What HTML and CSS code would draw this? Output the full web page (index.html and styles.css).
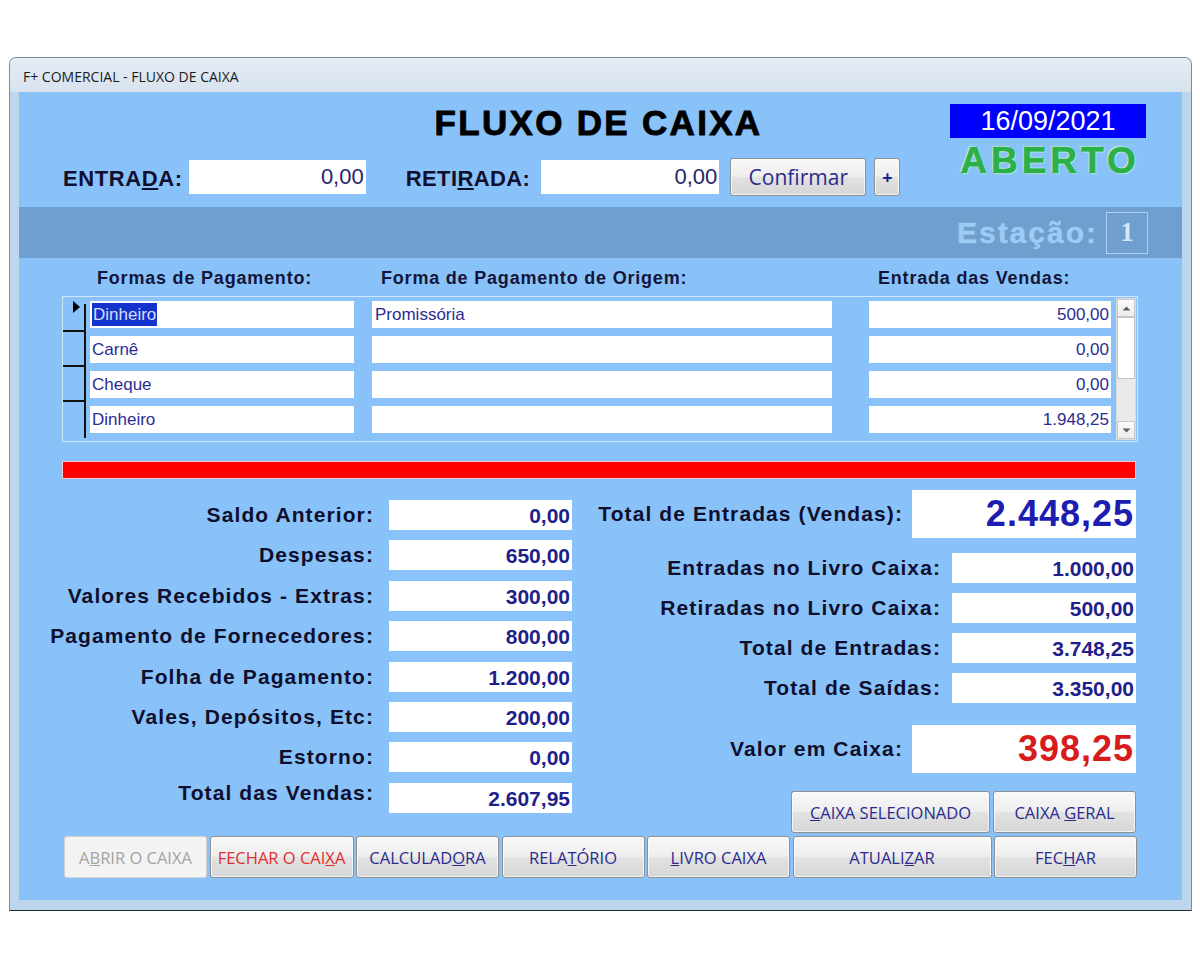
FILE: index.html
```html
<!DOCTYPE html>
<html lang="pt-BR">
<head>
<meta charset="utf-8">
<title>F+ COMERCIAL - FLUXO DE CAIXA</title>
<link rel="stylesheet" href="styles.css">
</head>
<body>
<div class="window">
  <div class="titlebar">F+ COMERCIAL - FLUXO DE CAIXA</div>
  <div class="client">
    <header class="head">
      <div class="head-main">
        <h1 class="title">FLUXO DE CAIXA</h1>
        <div class="quick">
          <span class="ql">ENTRA<u>D</u>A:</span>
          <div class="qin">0,00</div>
          <span class="ql ql2">RETI<u>R</u>ADA:</span>
          <div class="qin qin2">0,00</div>
          <button class="btn confirm">Confirmar</button>
          <button class="btn plus">+</button>
        </div>
      </div>
      <div class="head-side">
        <div class="date">16/09/2021</div>
        <div class="status">ABERTO</div>
      </div>
    </header>

    <div class="band">
      <span class="est">Estação:</span>
      <span class="estbox">1</span>
    </div>

    <div class="cols">
      <span class="ch ch1">Formas de Pagamento:</span>
      <span class="ch ch2">Forma de Pagamento de Origem:</span>
      <span class="ch ch3">Entrada das Vendas:</span>
    </div>

    <div class="grid">
      <div class="ind">
        <div class="ind-cell first"><span class="arrow"></span></div>
        <div class="ind-cell"></div>
        <div class="ind-cell"></div>
        <div class="ind-cell last"></div>
      </div>
      <div class="rows">
        <div class="row">
          <div class="cell c1"><span class="sel">Dinheiro</span></div>
          <div class="cell c2">Promissória</div>
          <div class="cell c3">500,00</div>
        </div>
        <div class="row">
          <div class="cell c1">Carnê</div>
          <div class="cell c2"></div>
          <div class="cell c3">0,00</div>
        </div>
        <div class="row">
          <div class="cell c1">Cheque</div>
          <div class="cell c2"></div>
          <div class="cell c3">0,00</div>
        </div>
        <div class="row">
          <div class="cell c1">Dinheiro</div>
          <div class="cell c2"></div>
          <div class="cell c3">1.948,25</div>
        </div>
      </div>
      <div class="scroll">
        <div class="sbtn up"><svg width="9" height="5" viewBox="0 0 9 5"><path d="M0.5 4.5 L4.5 0.5 L8.5 4.5 Z" fill="#606060"/></svg></div>
        <div class="thumb"></div>
        <div class="track"></div>
        <div class="sbtn down"><svg width="9" height="5" viewBox="0 0 9 5"><path d="M0.5 0.5 L4.5 4.5 L8.5 0.5 Z" fill="#606060"/></svg></div>
      </div>
    </div>

    <div class="redbar"></div>

    <div class="lower">
      <div class="left">
        <div class="frow"><span class="flabel">Saldo Anterior:</span><div class="fbox">0,00</div></div>
        <div class="frow"><span class="flabel">Despesas:</span><div class="fbox">650,00</div></div>
        <div class="frow"><span class="flabel">Valores Recebidos - Extras:</span><div class="fbox">300,00</div></div>
        <div class="frow"><span class="flabel">Pagamento de Fornecedores:</span><div class="fbox">800,00</div></div>
        <div class="frow"><span class="flabel">Folha de Pagamento:</span><div class="fbox">1.200,00</div></div>
        <div class="frow"><span class="flabel">Vales, Depósitos, Etc:</span><div class="fbox">200,00</div></div>
        <div class="frow"><span class="flabel">Estorno:</span><div class="fbox">0,00</div></div>
        <div class="frow"><span class="flabel up">Total das Vendas:</span><div class="fbox">2.607,95</div></div>
      </div>
      <div class="right">
        <div class="rrow big"><span class="rlabel">Total de Entradas (Vendas):</span><div class="bigbox blue">2.448,25</div></div>
        <div class="rrow small first"><span class="rlabel">Entradas no Livro Caixa:</span><div class="sbox">1.000,00</div></div>
        <div class="rrow small"><span class="rlabel">Retiradas no Livro Caixa:</span><div class="sbox">500,00</div></div>
        <div class="rrow small"><span class="rlabel">Total de Entradas:</span><div class="sbox">3.748,25</div></div>
        <div class="rrow small"><span class="rlabel">Total de Saídas:</span><div class="sbox">3.350,00</div></div>
        <div class="rrow big last"><span class="rlabel">Valor em Caixa:</span><div class="bigbox red">398,25</div></div>
        <div class="rbtns">
          <button class="btn act wide"><u>C</u>AIXA SELECIONADO</button>
          <button class="btn act">CAIXA <u>G</u>ERAL</button>
        </div>
      </div>
    </div>

    <div class="actions">
      <button class="btn act disabled">A<u>B</u>RIR O CAIXA</button>
      <button class="btn act danger">FECHAR O CAI<u>X</u>A</button>
      <button class="btn act">CALCULAD<u>O</u>RA</button>
      <button class="btn act">RELA<u>T</u>ÓRIO</button>
      <button class="btn act"><u>L</u>IVRO CAIXA</button>
      <button class="btn act">ATUALI<u>Z</u>AR</button>
      <button class="btn act">FEC<u>H</u>AR</button>
    </div>
  </div>
</div>
</body>
</html>
```

FILE: styles.css
```css
* { box-sizing: border-box; }

html, body {
  margin: 0;
  padding: 0;
  background: #ffffff;
}

body {
  padding: 57px 0 0 9px;
  font-family: "Liberation Sans", Arial, sans-serif;
}

.window {
  width: 1183px;
  height: 854px;
  border: 1px solid #7d8c9b;
  border-bottom-color: #1f2a33;
  border-radius: 7px 7px 0 0;
  background: #bed6ec;
  overflow: hidden;
}

.titlebar {
  height: 34px;
  padding: 10px 0 0 13px;
  font-family: "Open Sans", "Noto Sans", sans-serif;
  font-size: 14px;
  line-height: 18px;
  color: #1b1b1b;
  background: linear-gradient(#e5edf5, #d7e3ee);
}

.client {
  margin: 0 9px;
  width: 1163px;
  height: 808px;
  background: #88c2f9;
}

/* ---------- header ---------- */
.head {
  display: flex;
  height: 115px;
}

.head-main {
  width: 911px;
  padding-top: 11px;
}

.title {
  margin: 0;
  padding-left: 248px;
  text-align: center;
  font-size: 35px;
  line-height: 40px;
  font-weight: bold;
  letter-spacing: 2.3px;
  color: #000;
  -webkit-text-stroke: 0.9px #000;
}

.quick {
  display: flex;
  align-items: center;
  height: 38px;
  margin-top: 15px;
  padding-left: 44px;
}

.ql {
  font-size: 22px;
  font-weight: bold;
  letter-spacing: 0.6px;
  color: #10102e;
  margin-right: 6px;
  padding-top: 3px;
}

.ql2 {
  margin-left: 40px;
  margin-right: 11px;
  letter-spacing: 0.4px;
}

.qin {
  width: 177px;
  height: 34px;
  background: #fff;
  text-align: right;
  padding-right: 2px;
  font-size: 22px;
  line-height: 34px;
  color: #25256e;
}

.qin2 { width: 178px; }

.btn {
  font-family: "Open Sans", "Noto Sans", sans-serif;
  color: #2b2b8e;
  background: linear-gradient(#f8f8f8 0%, #eeeeee 48%, #e2e2e2 52%, #d6d6d6 100%);
  border: 1px solid #8f9091;
  border-radius: 3px;
  box-shadow: inset 0 0 0 1px rgba(255,255,255,0.7);
  padding: 0;
  cursor: default;
}

.confirm {
  width: 136px;
  height: 38px;
  margin-left: 11px;
  font-size: 21px;
}

.plus {
  width: 26px;
  height: 38px;
  margin-left: 8px;
  font-size: 18px;
  font-weight: bold;
  color: #1e1e90;
}

.head-side {
  width: 216px;
  padding: 12px 0 0 20px;
}

.date {
  width: 196px;
  height: 34px;
  background: #0000ff;
  color: #fff;
  text-align: center;
  font-size: 27px;
  line-height: 34px;
}

.status {
  width: 196px;
  margin-top: 3px;
  text-align: center;
  font-size: 37px;
  line-height: 40px;
  font-weight: bold;
  letter-spacing: 4px;
  padding-left: 4px;
  color: #2bb04a;
  -webkit-text-stroke: 0.7px #2bb04a;
  text-shadow: 0 0 1px #e6ffe9, 1px 1px 1px rgba(220,255,225,0.8), -1px -1px 1px rgba(220,255,225,0.8);
}

/* ---------- band ---------- */
.band {
  height: 51px;
  background: #6e9fcf;
  display: flex;
  justify-content: flex-end;
  align-items: center;
  padding-right: 34px;
}

.est {
  font-size: 30px;
  font-weight: bold;
  letter-spacing: 2px;
  color: #9ccbf3;
  margin-right: 8px;
  -webkit-text-stroke: 0.4px #9ccbf3;
}

.estbox {
  width: 42px;
  height: 42px;
  border: 1px solid #a9d0f2;
  display: flex;
  align-items: center;
  justify-content: center;
  font-family: "Liberation Serif", "Times New Roman", serif;
  font-weight: bold;
  font-size: 27px;
  color: #d3e8fb;
}

/* ---------- column headers ---------- */
.cols {
  display: flex;
  align-items: center;
  height: 38px;
  padding-left: 78px;
  padding-top: 2px;
}

.ch {
  font-size: 18px;
  font-weight: bold;
  letter-spacing: 0.8px;
  color: #15153a;
}

.ch1 { width: 284px; }
.ch2 { width: 497px; }

/* ---------- grid ---------- */
.grid {
  display: flex;
  height: 146px;
  margin: 0 44px 0 43px;
  border: 1px solid #d0e6f9;
}

.ind {
  width: 23px;
}

.ind-cell {
  height: 35px;
  border-right: 2px solid #111;
  border-bottom: 2px solid #111;
  position: relative;
}

.ind-cell.first {
  border-right: none;
  background: linear-gradient(#111, #111) right bottom / 2px 26px no-repeat;
}

.ind-cell.last {
  border-bottom: none;
  height: 36px;
}

.arrow {
  position: absolute;
  left: 10px;
  top: 4px;
  width: 0;
  height: 0;
  border-top: 6px solid transparent;
  border-bottom: 6px solid transparent;
  border-left: 7px solid #000;
}

.rows {
  width: 1030px;
}

.row {
  display: flex;
  align-items: center;
  height: 35px;
  padding-left: 4px;
}

.cell {
  height: 27px;
  background: #fff;
  font-size: 17px;
  line-height: 27px;
  color: #2c2c94;
  padding-left: 3px;
  white-space: nowrap;
  overflow: hidden;
}

.c1 { width: 264px; padding-left: 2px; }
.c2 { width: 460px; margin-left: 18px; }
.c3 { width: 242px; margin-left: 37px; text-align: right; padding-right: 2px; }

.sel {
  display: inline-block;
  background: #1333cc;
  color: #d7defc;
  line-height: 23px;
  padding: 0 1px;
}

.scroll {
  width: 20px;
  height: 142px;
  margin: 1px 0 0 0;
  display: flex;
  flex-direction: column;
  background: #eaeaea;
  border: 1px solid #dcdcdc;
}

.sbtn {
  height: 18px;
  display: flex;
  align-items: center;
  justify-content: center;
  background: linear-gradient(#fbfbfb, #ececec);
  border: 1px solid #c9c9c9;
}

.thumb {
  height: 62px;
  background: #fff;
  border: 1px solid #c4c4c4;
}

.track { flex: 1; }

/* ---------- red bar ---------- */
.redbar {
  height: 18px;
  margin: 19px 46px 0 43px;
  background: #ff0000;
  border: 1px solid #f3cdcd;
}

/* ---------- lower ---------- */
.lower {
  display: flex;
  align-items: flex-start;
}

.left {
  width: 553px;
  padding-top: 21px;
  display: flex;
  flex-direction: column;
  gap: 10.4px;
}

.frow {
  display: flex;
  align-items: center;
  height: 30px;
}

.flabel, .rlabel {
  font-size: 21px;
  font-weight: bold;
  letter-spacing: 1.1px;
  color: #0f0f2d;
  white-space: nowrap;
}

.flabel {
  flex: 1;
  text-align: right;
  padding-right: 15px;
}

.flabel.up { margin-top: -10px; }

.fbox, .sbox {
  width: 183px;
  height: 30px;
  background: #fff;
  text-align: right;
  padding-right: 2px;
  font-size: 21px;
  font-weight: bold;
  line-height: 31px;
  color: #1f1f8c;
}

.right {
  flex: 1;
  padding: 11px 46px 0 0;
  display: flex;
  flex-direction: column;
}

.rrow {
  display: flex;
  justify-content: flex-end;
  align-items: center;
}

.rrow.small {
  height: 30px;
  margin-top: 10px;
}

.rrow.small.first { margin-top: 15px; }
.rrow.small .rlabel { margin-right: 11px; }

.sbox { width: 184px; }

.rrow.big { height: 48px; }
.rrow.big.last { margin-top: 22px; }
.rrow.big .rlabel { margin-right: 9px; }

.bigbox {
  width: 224px;
  height: 48px;
  background: #fff;
  text-align: right;
  padding-right: 2px;
  font-size: 36px;
  font-weight: bold;
  letter-spacing: 1px;
  line-height: 48px;
}

.bigbox.blue { color: #1d1db2; }
.bigbox.red { color: #d81b1b; }

.rbtns {
  display: flex;
  justify-content: flex-end;
  gap: 3px;
  margin-top: 18px;
}

.act {
  height: 42px;
  width: 143px;
  font-size: 16.5px;
  color: #2b2b8e;
}

.act.wide { width: 199px; }

.actions {
  display: grid;
  grid-template-columns: 143px 144px 143px 143px 143px 199px 143px;
  gap: 2.5px;
  margin-top: 3px;
  padding-left: 45px;
}

.actions .act { width: 100%; }

.act.disabled {
  background: #f3f3f3;
  border-color: #d2d2d2;
  color: #a3a3a3;
  box-shadow: none;
}

.act.danger { color: #e0302e; }
```
